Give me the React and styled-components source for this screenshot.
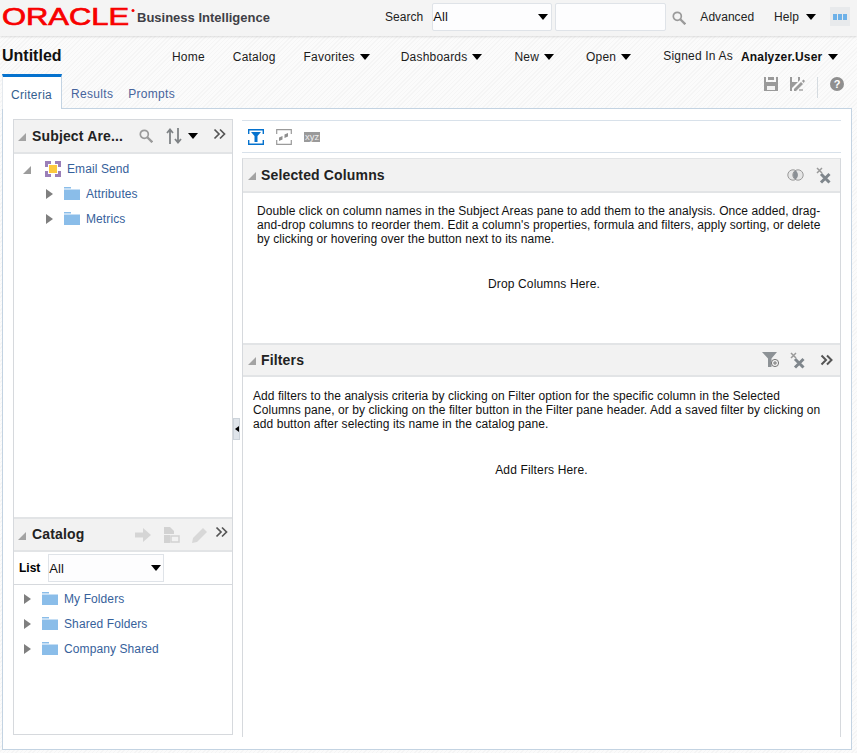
import React from 'react';
import styled, { createGlobalStyle } from 'styled-components';

const Global = createGlobalStyle`
  html, body { margin: 0; padding: 0; background: #fff; }
  body { font-family: "Liberation Sans", Arial, sans-serif; font-size: 12px; color: #000; }
  * { box-sizing: border-box; }
`;

const Page = styled.div`
  width: 857px; height: 753px; overflow: hidden; display: flex; flex-direction: column;
  background: repeating-linear-gradient(135deg, #f5f5f5 0, #f5f5f5 1px, #fbfbfb 1px, #fbfbfb 3px);
`;
const Header = styled.header`
  height: 36px; flex: none; display: flex; align-items: center; background: #f4f4f4;
  padding-left: 2px; box-shadow: 0 1px 2px rgba(0,0,0,.12); position: relative;
`;
const Logo = styled.svg`display: block; width: 135px; height: 30px; flex: none; overflow: visible;`;
const Product = styled.span`
  font-size: 13px; font-weight: bold; color: #3f3f46; margin-top: -2px; width: 248px; flex: none;
`;
const HeadText = styled.span`color: #222; margin-top: -3px; margin-right: ${p => p.$mr || 0}px; margin-left: ${p => p.$ml || 0}px; letter-spacing: .05px;`;
const SelectBox = styled.div`
  background: #fdfdfe; border: 1px solid #dfe3e8; display: flex; align-items: center;
  justify-content: space-between; padding: 0 1px 0 0; font-size: 13px; color: #111;
  width: ${p => p.$w}px; height: ${p => p.$h}px; flex: none;
`;
const HeadSelect = styled(SelectBox)`margin-top: -3px; margin-right: 3px; border-radius: 2px; padding-right: 3px;`;
const TextBox = styled.div`
  width: 111px; height: 28px; background: #fdfdfe; border: 1px solid #dfe3e8; border-radius: 2px; margin-top: -3px; margin-right: 6px;
`;
const Caret = styled.span`
  display: inline-block; width: 0; height: 0; flex: none;
  border-left: 5px solid transparent; border-right: 5px solid transparent; border-top: 6px solid #000;
  margin-left: ${p => p.$ml ?? 6}px;
`;
const HelpCaret = styled(Caret)`margin-top: -2px;`;
const AppsBox = styled.div`
  width: 20px; height: 19px; margin-left: 14px; margin-top: -3px; background: #e8eaec; display: flex; gap: 1px;
  align-items: center; justify-content: center;
`;
const AppsDot = styled.span`width: 4px; height: 6px; background: #6db1e8;`;

const NavRow = styled.nav`
  height: 38px; flex: none; display: flex; align-items: center; padding: 3px 0 0 2px;
`;
const Title = styled.h1`
  margin: 0; font-size: 16px; font-weight: bold; width: 170px; flex: none; color: #111; margin-top: -1px;
`;
const NavItem = styled.span`
  display: flex; align-items: center; color: #1c1c1c; margin-right: ${p => p.$mr ?? 28}px; letter-spacing: 0.2px;
  white-space: nowrap;
`;
const SignedIn = styled.span`color: #1c1c1c; margin-top: -2px; margin-right: 8px; letter-spacing: .2px;`;
const UserName = styled.span`font-weight: bold; display: flex; align-items: center; color: #111; letter-spacing: .15px;`;

const TabRow = styled.div`
  height: 34px; flex: none; display: flex; padding-left: 2px; align-items: stretch; position: relative; z-index: 1;
`;
const Tab = styled.div`
  height: 35px; padding: 0 ${p => p.$active ? '9px 0 8px' : '0'}; margin-right: ${p => p.$active ? 9 : 15}px;
  display: flex; align-items: center; padding-top: 4px; letter-spacing: .3px; color: ${p => p.$active ? '#33608f' : '#47649c'};
  background: ${p => p.$active ? '#fff' : 'transparent'};
  ${p => p.$active ? 'border-top: 3px solid #0572ce; border-right: 1px solid #c3d3e2; border-left: 1px solid #e4e9ee;' : ''}
`;
const TabTools = styled.div`
  margin-left: auto; display: flex; align-items: flex-start; padding-top: 3px; padding-right: 13px;
`;
const ToolDivider = styled.span`width: 1px; height: 21px; background: #d5dbe0; margin: 0 12px;`;
const Tool = styled.svg`display: block; flex: none; margin-left: ${p => p.$ml || 0}px;`;

const Panel = styled.main`
  flex: none; height: 642px; margin: 0 5px 0 2px; background: #fff; border: 1px solid #c3d3e2;
  display: grid; grid-template-columns: 220px 9px 599px; padding: 10px 0 0 10px;
`;
const LeftPane = styled.section`
  height: 616px; border: 1px solid #d6d9dd; border-top-width: 1px; display: flex; flex-direction: column;
`;
const PaneHead = styled.div`
  height: ${p => p.$h || 34}px; flex: none; background: #f2f2f2; border-bottom: 2px solid #e2e4e6;
  ${p => p.$top ? 'border-top: 2px solid #e2e4e6;' : ''}
  display: flex; align-items: center; padding-left: 4px;
`;
const PaneTitle = styled.h2`
  margin: 0; font-size: 14px; font-weight: bold; color: #222; letter-spacing: .15px; margin-left: ${p => p.$ml ?? 5}px;
  margin-top: ${p => p.$mt || 0}px; white-space: nowrap;
`;
const Corner = styled.span`
  width: 0; height: 0; flex: none; border-left: 8px solid transparent; border-bottom: 8px solid #a3a3a3; margin-top: 2px;
`;
const TreeArea = styled.div`flex: ${p => p.$h ? 'none' : 1}; height: ${p => p.$h ? `${p.$h}px` : 'auto'}; padding-top: ${p => p.$pt || 3}px;`;
const TreeRow = styled.div`
  height: 25px; display: flex; align-items: center; padding-left: ${p => p.$indent}px;
`;
const Twist = styled.span`
  width: 0; height: 0; flex: none; margin-right: 11px;
  border-top: 5px solid transparent; border-bottom: 5px solid transparent; border-left: 7px solid #7f7f7f;
`;
const TreeCorner = styled.span`
  width: 0; height: 0; flex: none; margin-right: 14px; border-left: 8px solid transparent; border-bottom: 8px solid #9c9c9c; margin-top: 2px;
`;
const TreeLabel = styled.span`color: #36619b; margin-left: ${p => p.$ml || 6}px; letter-spacing: .1px;`;
const ListRow = styled.div`
  height: 33px; flex: none; border-bottom: 1px solid #d6d9dd; display: flex; align-items: center; padding-left: 5px; gap: 8px;
`;
const ListLabel = styled.span`font-weight: bold; font-size: 12px;`;
const ListSelect = styled(SelectBox)`padding-right: 2px;`;

const Splitter = styled.div`display: flex; align-items: flex-start; padding-top: 299px;`;
const SplitHandle = styled.div`
  width: 7px; height: 22px; background: #dfe4ea; border: 1px solid #ccd3da; display: flex; align-items: center; justify-content: center;
`;
const SplitArrow = styled.span`
  width: 0; height: 0; border-top: 3px solid transparent; border-bottom: 3px solid transparent; border-right: 4px solid #000;
`;
const RightPane = styled.section`display: flex; flex-direction: column; height: 618px;`;
const ViewBar = styled.div`
  height: 33px; flex: none; margin-top: 1px; border-top: 1px solid #d8e1ea; border-bottom: 1px solid #d8e1ea; display: flex; align-items: center; padding-left: 6px; gap: 8px;
`;
const SectionWrap = styled.div`
  margin-top: 5px; flex: 1; display: flex; flex-direction: column; border-left: 1px solid #d6d9dd; border-right: 1px solid #d6d9dd; border-top: 1px solid #e2e4e6;
`;
const SectionHead = styled(PaneHead)`
  padding-left: 5px; padding-right: ${p => p.$pr || 9}px;
`;
const HeadTools = styled.div`margin-left: auto; display: flex; align-items: center; gap: ${p => p.$gap || 10}px;`;
const SectionBody = styled.div`
  height: ${p => p.$h}px; flex: none; padding: ${p => p.$pt}px 14px 0 ${p => p.$pl}px;
`;
const SectionText = styled.p`margin: 0; line-height: 14px; color: #111; letter-spacing: .07px;`;
const DropHint = styled.div`
  text-align: center; color: #111; margin-top: ${p => p.$mt}px; padding-left: ${p => p.$pl}px; letter-spacing: .15px;
`;
const LeftTools = styled.div`margin-left: auto; display: flex; align-items: center; padding-right: ${p => p.$pr || 6}px;`;
const Chevrons = styled.svg`
  display: block; flex: none; margin-top: ${p => p.$mt ?? -5}px; margin-left: ${p => p.$ml || 0}px;
`;

const Folder = () => (
  <svg width="16" height="13" viewBox="0 0 16 13">
    <path d="M0 0h7v1.500H0z" fill="#8abde9" /><path d="M0 2.500h16V13H0z" fill="#8abde9" />
  </svg>
);
const SearchIcon = ({ c = '#9a9a9a' }) => (
  <Tool width="14" height="14" viewBox="0 0 14 14" fill="none">
    <circle cx="5.300" cy="5.300" r="4" stroke={c} strokeWidth="1.700" />
    <path d="M8.300 8.300l5 5" stroke={c} strokeWidth="2.300" />
  </Tool>
);
const ChevR = ({ c = '#555', ml = 0, mt, sw = 1.7 }) => (
  <Chevrons $ml={ml} $mt={mt} width="13" height="12" viewBox="0 0 13 12" fill="none" stroke={c} strokeWidth={sw}>
    <path d="M1.500 1.500l4.500 4.500-4.500 4.500M7 1.500l4.500 4.500-4.500 4.500" />
  </Chevrons>
);
const ClearX = () => (
  <svg width="15" height="17" viewBox="0 0 15 17" fill="none">
    <path d="M1 1l5 5M6 1L1 6" stroke="#9a9a9a" strokeWidth="1.500" />
    <path d="M5 7l8.500 8.500M13.500 7L5 15.500" stroke="#7f868c" strokeWidth="3" />
  </svg>
);
const Venn = () => (
  <svg width="17" height="12" viewBox="0 0 17 12">
    <circle cx="6" cy="6" r="5.200" fill="#e6e6e6" stroke="#9a9a9a" />
    <circle cx="11" cy="6" r="5.200" fill="#e6e6e6" stroke="#9a9a9a" />
    <path d="M8.500 1.600a5.200 5.200 0 0 1 0 8.800a5.200 5.200 0 0 1 0-8.800z" fill="#8a8f94" />
  </svg>
);
const FilterAdd = () => (
  <svg width="18" height="16" viewBox="0 0 18 16">
    <path d="M0 0h15L9.500 6.500V15H6V6.500z" fill="#8d9296" />
    <circle cx="13" cy="11" r="3.600" fill="#f2f2f2" stroke="#777" />
    <path d="M11 11h4M13 9v4" stroke="#777" />
  </svg>
);

export default function App() {
  return (
    <Page>
      <Global />
      <Header>
        <Logo viewBox="0 0 135 30">
          <text x="0" y="22" fontFamily="Liberation Sans" fontSize="24" fill="#f80000" stroke="#f80000" strokeWidth=".7" textLength="127" lengthAdjust="spacingAndGlyphs">ORACLE</text>
          <circle cx="131" cy="7.500" r="1.500" fill="#f80000" />
        </Logo>
        <Product>Business Intelligence</Product>
        <HeadText $mr={9}>Search</HeadText>
        <HeadSelect $w={120} $h={28}>All<Caret /></HeadSelect>
        <TextBox />
        <SearchIcon />
        <HeadText $mr={20} $ml={14}>Advanced</HeadText>
        <HeadText>Help</HeadText>
        <HelpCaret $ml={7} />
        <AppsBox><AppsDot /><AppsDot /><AppsDot /></AppsBox>
      </Header>
      <NavRow>
        <Title>Untitled</Title>
        <NavItem>Home</NavItem>
        <NavItem>Catalog</NavItem>
        <NavItem $mr={31}>Favorites<Caret $ml={5} /></NavItem>
        <NavItem $mr={32}>Dashboards<Caret $ml={5} /></NavItem>
        <NavItem $mr={32}>New<Caret $ml={5} /></NavItem>
        <NavItem $mr={32}>Open<Caret $ml={5} /></NavItem>
        <SignedIn>Signed In As</SignedIn>
        <UserName>Analyzer.User<Caret /></UserName>
      </NavRow>
      <TabRow>
        <Tab $active>Criteria</Tab>
        <Tab>Results</Tab>
        <Tab>Prompts</Tab>
        <TabTools>
          <Tool width="14" height="14" viewBox="0 0 14 14">
            <path d="M0 0h2v5h10V0h2v14H0z" fill="#9a9a9a" /><path d="M3 9h8v4H3z" fill="#f3f3f3" /><path d="M4 0h6v3H4z" fill="#9a9a9a" />
          </Tool>
          <Tool $ml={12} width="15" height="14" viewBox="0 0 15 14">
            <path d="M0 0h2v5h6V0h2v3l-8 8v3H0z" fill="#9a9a9a" /><path d="M4 14v-2l7-7 2 2-7 7z" fill="#9a9a9a" /><path d="M12 4l1.500-1.500 1.500 1.500L13.500 6z" fill="#9a9a9a" />
            <path d="M9 12h4v2H9z" fill="#bbb" />
          </Tool>
          <ToolDivider />
          <Tool width="14" height="14" viewBox="0 0 14 14">
            <circle cx="7" cy="7" r="7" fill="#8f8f8f" />
            <text x="7" y="11" textAnchor="middle" fontFamily="Liberation Sans" fontWeight="bold" fontSize="11" fill="#fff">?</text>
          </Tool>
        </TabTools>
      </TabRow>
      <Panel>
        <LeftPane>
          <PaneHead>
            <Corner />
            <PaneTitle $ml={6}>Subject Are...</PaneTitle>
            <LeftTools $pr={6}>
              <SearchIcon />
              <Tool $ml={13} width="16" height="16" viewBox="0 0 16 16" fill="none" stroke="#7f8386" strokeWidth="1.800">
                <path d="M4 16V2M1 5l3-3.500L7 5M12 0v14M9 11l3 3.500 3-3.500" />
              </Tool>
              <Caret $ml={6} />
              <ChevR ml={15} />
            </LeftTools>
          </PaneHead>
          <TreeArea $pt={2} $h={363}>
            <TreeRow $indent={9}>
              <TreeCorner />
              <svg width="16" height="16" viewBox="0 0 16 16">
                <path d="M0 0h16v16H0z" fill="#9b7fb8" /><path d="M6 0h4v16H6zM0 6h16v4H0z" fill="#fff" /><path d="M3 3h10v10H3z" fill="#fff" /><path d="M4 4h8v8H4z" fill="#fcc93f" />
              </svg>
              <TreeLabel>Email Send</TreeLabel>
            </TreeRow>
            <TreeRow $indent={32}><Twist /><Folder /><TreeLabel>Attributes</TreeLabel></TreeRow>
            <TreeRow $indent={32}><Twist /><Folder /><TreeLabel>Metrics</TreeLabel></TreeRow>
          </TreeArea>
          <PaneHead $top $h={35}>
            <Corner />
            <PaneTitle $ml={6} $mt={-2}>Catalog</PaneTitle>
            <LeftTools $pr={4}>
              <Tool width="16" height="14" viewBox="0 0 16 14"><path d="M0 4.500h8V0l8 7-8 7V9.500H0z" fill="#d5d5d5" /></Tool>
              <Tool $ml={13} width="16" height="16" viewBox="0 0 16 16"><path d="M0 0h6l4 4v3H0zM0 8h6v8H0z" fill="#d2d2d2" /><path d="M7 9h8v6H7z" fill="none" stroke="#d2d2d2" strokeWidth="1.500" /></Tool>
              <Tool $ml={12} width="16" height="16" viewBox="0 0 16 16"><path d="M0 16l1-5L11 1l4 4L5 15z" fill="#d8d8d8" /></Tool>
              <ChevR ml={7} />
            </LeftTools>
          </PaneHead>
          <ListRow>
            <ListLabel>List</ListLabel>
            <ListSelect $w={116} $h={28}>All<Caret /></ListSelect>
          </ListRow>
          <TreeArea $pt={1}>
            <TreeRow $indent={10}><Twist /><Folder /><TreeLabel>My Folders</TreeLabel></TreeRow>
            <TreeRow $indent={10}><Twist /><Folder /><TreeLabel>Shared Folders</TreeLabel></TreeRow>
            <TreeRow $indent={10}><Twist /><Folder /><TreeLabel>Company Shared</TreeLabel></TreeRow>
          </TreeArea>
        </LeftPane>
        <Splitter><SplitHandle><SplitArrow /></SplitHandle></Splitter>
        <RightPane>
          <ViewBar>
            <Tool width="16" height="16" viewBox="0 0 16 16" fill="none">
              <path d="M.7 5V.7h14.600V5M.7 11v4.300h14.600V11" stroke="#0572ce" strokeWidth="1.400" />
              <path d="M3 3h10L9.500 7v6h-3V7z" fill="#0572ce" />
            </Tool>
            <Tool $ml={4} width="16" height="16" viewBox="0 0 16 16" fill="none">
              <path d="M.7 5V.7h14.600V5M.7 11v4.300h14.600V11" stroke="#9a9a9a" strokeWidth="1.200" />
              <path d="M3 12l3.500-1.500V7L3 8.500zM8.500 9l3.500-1.500V4L8.500 5.500z" fill="#8f8f8f" />
            </Tool>
            <Tool $ml={4} width="16" height="10" viewBox="0 0 16 10">
              <path d="M0 0h16v10H0z" fill="#9a9a9a" />
              <text x="8" y="8" textAnchor="middle" fontFamily="Liberation Sans" fontSize="9.500" fill="#eee">xyz</text>
            </Tool>
          </ViewBar>
          <SectionWrap>
            <SectionHead>
              <Corner />
              <PaneTitle>Selected Columns</PaneTitle>
              <HeadTools $gap={12}><Venn /><ClearX /></HeadTools>
            </SectionHead>
            <SectionBody $h={150} $pl={14} $pt={11}>
              <SectionText>Double click on column names in the Subject Areas pane to add them to the analysis. Once added, drag-and-drop columns to reorder them. Edit a column's properties, formula and filters, apply sorting, or delete by clicking or hovering over the button next to its name.</SectionText>
              <DropHint $mt={31} $pl={5}>Drop Columns Here.</DropHint>
            </SectionBody>
            <SectionHead $top $pr={7}>
              <Corner />
              <PaneTitle>Filters</PaneTitle>
              <HeadTools $gap={10}><FilterAdd /><ClearX /><ChevR c="#555" ml={5} mt={0} sw={2} /></HeadTools>
            </SectionHead>
            <SectionBody $h={200} $pl={10} $pt={12}>
              <SectionText>Add filters to the analysis criteria by clicking on Filter option for the specific column in the Selected Columns pane, or by clicking on the filter button in the Filter pane header. Add a saved filter by clicking on add button after selecting its name in the catalog pane.</SectionText>
              <DropHint $mt={32} $pl={4}>Add Filters Here.</DropHint>
            </SectionBody>
          </SectionWrap>
        </RightPane>
      </Panel>
    </Page>
  );
}
